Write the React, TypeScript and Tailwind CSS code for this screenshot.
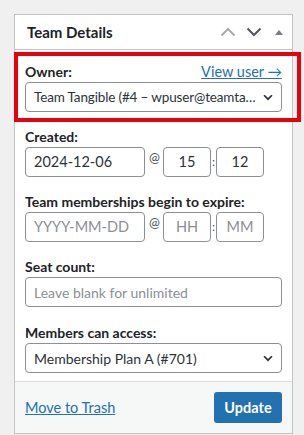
import React from 'react';

const font = { fontFamily: 'Lato, "Noto Sans", Arial, sans-serif' };

function ChevronUp({ className }: { className?: string }) {
  return (
    <svg viewBox="0 0 20 20" className={className} fill="none" stroke="currentColor" strokeWidth="2">
      <path d="M3.5 13.5l6.5-6.5 6.5 6.5" />
    </svg>
  );
}

function ChevronDown({ className }: { className?: string }) {
  return (
    <svg viewBox="0 0 20 20" className={className} fill="none" stroke="currentColor" strokeWidth="2">
      <path d="M3.5 6.5l6.5 6.5 6.5-6.5" />
    </svg>
  );
}

function SmallChevron() {
  return (
    <svg viewBox="0 0 16 16" className="h-[14px] w-[14px] shrink-0 text-[#2c3338]" fill="none" stroke="currentColor" strokeWidth="2">
      <path d="M3.5 6l4.5 4.5L12.5 6" />
    </svg>
  );
}

function Select({ value, small }: { value: string; small?: boolean }) {
  return (
    <div className="flex h-[30px] items-center justify-between gap-[4px] rounded-[4px] border border-[#8c8f94] bg-white pl-[8px] pr-[6px] text-[14px] text-[#2c3338]">
      <span className={`min-w-0 overflow-hidden whitespace-nowrap ${small ? 'text-[13.5px] tracking-[-0.15px]' : ''}`}>{value}</span>
      <SmallChevron />
    </div>
  );
}

function Label({ children }: { children: React.ReactNode }) {
  return <div className="text-[14px] font-bold leading-[20px] text-[#1d2327]">{children}</div>;
}

function DateRow({ date, hour, minute, placeholder }: { date: string; hour: string; minute: string; placeholder?: boolean }) {
  const txt = placeholder ? 'text-[#8c8f94]' : 'text-[#2c3338]';
  return (
    <div className="flex items-center text-[14.5px]">
      <div className={`flex h-[30px] w-[120px] items-center rounded-[4px] border border-[#8c8f94] bg-white pl-[8px] ${txt}`}>{date}</div>
      <span className="mx-[4px] -mt-[8px] w-[10px] text-center text-[13px] text-[#50575e]">@</span>
      <div className={`flex h-[30px] w-[48px] items-center justify-center rounded-[4px] border border-[#8c8f94] bg-white ${txt}`}>{hour}</div>
      <span className="w-[5px] text-center text-[12px] text-[#50575e]">:</span>
      <div className={`flex h-[30px] w-[48px] items-center justify-center rounded-[4px] border border-[#8c8f94] bg-white ${txt}`}>{minute}</div>
    </div>
  );
}

export default function App() {
  return (
    <div className="min-h-[435px] bg-[#f0f0f1] pl-[14px] pt-[14px]" style={font}>
      <div className="w-[279px] border border-[#c3c4c7] bg-white">
        {/* Header */}
        <div className="flex h-[35px] items-center justify-between border-b border-[#c3c4c7] pl-[12px] pr-[8px]">
          <h2 className="text-[15px] font-bold text-[#1d2327]">Team Details</h2>
          <div className="flex items-center gap-[6px]">
            <ChevronUp className="h-[20px] w-[20px] text-[#a7aaad]" />
            <ChevronDown className="h-[20px] w-[20px] text-[#50575e]" />
            <svg viewBox="0 0 10 10" className="ml-[4px] h-[10px] w-[10px] text-[#787c82]">
              <path d="M1 8L5 3l4 5z" fill="currentColor" />
            </svg>
          </div>
        </div>

        {/* Body */}
        <div className="pb-[8px] pl-[10px] pr-[10px] pt-[12px]">
          <div className="relative">
            <div className="flex items-center justify-between">
              <Label>Owner:</Label>
              <a className="text-[14.5px] leading-[20px] text-[#2271b1] underline">View user →</a>
            </div>
            <Select value="Team Tangible (#4 – wpuser@teamta…" small />
            <div className="pointer-events-none absolute -left-[11px] -right-[19px] -top-[10px] -bottom-[10px] border-[4px] border-[#e8000b]" />
          </div>

          <div className="mt-[15px]">
            <Label>Created:</Label>
            <DateRow date="2024-12-06" hour="15" minute="12" />
          </div>

          <div className="mt-[15px]">
            <Label>Team memberships begin to expire:</Label>
            <DateRow date="YYYY-MM-DD" hour="HH" minute="MM" placeholder />
          </div>

          <div className="mt-[15px]">
            <Label>Seat count:</Label>
            <div className="flex h-[30px] items-center rounded-[4px] border border-[#8c8f94] bg-white pl-[8px] text-[14px] text-[#8c8f94]">
              Leave blank for unlimited
            </div>
          </div>

          <div className="mt-[16px]">
            <Label>Members can access:</Label>
            <Select value="Membership Plan A (#701)" />
          </div>
        </div>

        {/* Footer */}
        <div className="flex items-center justify-between border-t border-[#dcdcde] bg-[#f6f7f7] px-[10px] py-[10px]">
          <a className="text-[14.5px] text-[#2271b1] underline">Move to Trash</a>
          <button className="h-[31px] w-[68px] rounded-[3px] bg-[#2271b1] text-[14.5px] font-bold text-white">Update</button>
        </div>
      </div>
    </div>
  );
}
